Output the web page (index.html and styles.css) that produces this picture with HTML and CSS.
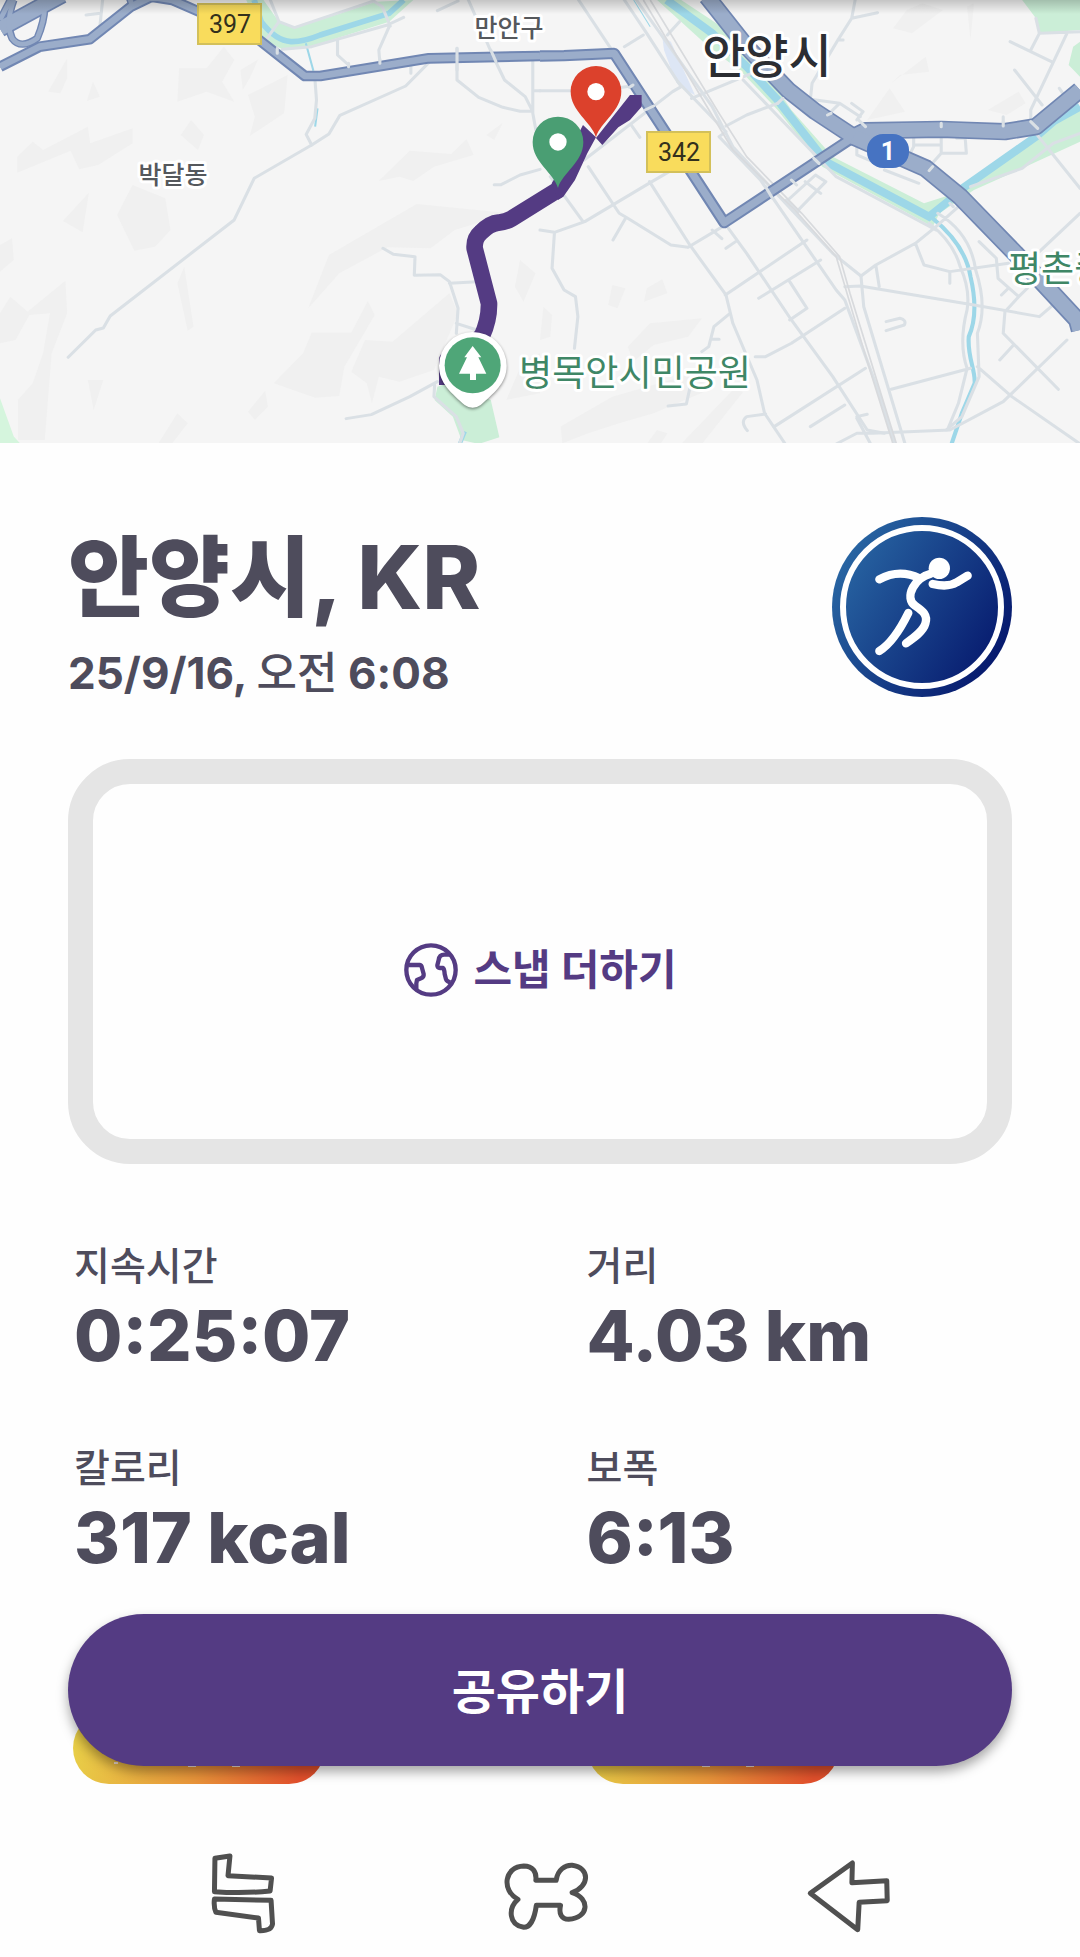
FILE: index.html
```html
<!DOCTYPE html>
<html lang="ko">
<head>
<meta charset="utf-8">
<meta name="viewport" content="width=device-width, initial-scale=1">
<title>안양시, KR</title>
<link rel="stylesheet" href="styles.css">
</head>
<body>
<main class="page">
  <svg class="map" viewBox="0 0 1080 443" role="img" aria-label="지도">
    <defs>
      <linearGradient id="topShade" x1="0" y1="0" x2="0" y2="1">
        <stop offset="0" stop-color="#000" stop-opacity=".2"/>
        <stop offset="1" stop-color="#000" stop-opacity="0"/>
      </linearGradient>
    </defs>
    <rect width="1080" height="443" fill="#f5f5f5"/>

    <!-- west half -->
    <g transform="scale(.3444 .3333)">
      <g class="relief">
        <path d="M50 470L95 425 125 450 255 380 262 430 385 385V430L285 495 230 508 205 452 50 518Z"/>
        <path d="M520 205H600L650 140 680 180 645 245 680 305 600 275 515 305Z"/>
        <path d="M698 210L750 178 725 235 705 270ZM720 285L835 225 825 340 725 408 740 350Z"/>
        <path d="M195 175V235L175 280 140 275ZM270 245L290 290 252 303ZM555 360L592 405 575 450 525 405Z"/>
        <path d="M385 555L480 595 495 690 450 740 390 752 340 645ZM258 578L240 697 183 663Z"/>
        <path d="M895 925L955 765 1210 612 1480 640 1320 690 1250 745 1125 742 985 820Z"/>
        <path d="M1100 543L1190 452 1310 462 1355 418 1375 465 1260 500 1200 543 1160 530Z"/>
        <path d="M1460 368L1435 420 1412 405ZM535 800L562 980 545 992 515 850Z"/>
        <path d="M905 998H1020L1068 903 1088 945 1000 1100 985 1188 915 1193 795 1150 880 1060Z"/>
        <path d="M1060 1020L1140 1025 1305 880 1330 940 1260 1110 1160 1145 1100 1130 1080 1210 1065 1150 1020 1115Z"/>
        <path d="M190 842L195 940 150 1060 130 1320H52V1200L95 1150 125 1060 145 940 85 945 45 1020 0 1030V940L30 890 80 935Z"/>
        <path d="M255 1140H300L272 1230ZM770 1172L778 1220 740 1260 720 1235ZM515 1240L545 1270 500 1330H460ZM35 715L40 780 0 815V735ZM1510 780L1555 820 1520 905 1495 860Z"/>
        <path d="M1520 1080L1568 1060V1180L1470 1200Z"/>
      </g>
      <path d="M0 1195L40 1310 60 1332H0Z" fill="#d5f5dd"/>
      <path d="M715 0H765L810 65 855 85 1090 5 1200 0 1130 65 900 140 820 148 765 120Z" fill="#cbeed7"/>
      <path d="M738 0L758 65Q800 122 845 125Q880 126 930 105L1130 40 1172 0" class="river" stroke-width="17"/>
      <path d="M888 130L910 212M922 325L915 380" class="river" stroke-width="6"/>
      <path d="M1270 1160L1300 1150 1425 1200 1450 1312 1390 1332 1340 1320 1315 1250 1262 1200Z" fill="#cbeed7"/>
      <path d="M1335 1332L1350 1295" class="river" stroke-width="12"/>
      <g class="street">
        <path d="M198 1072L278 990 300 984 320 948 680 660 738 535 905 435 955 402 987 346 1178 258 1245 188"/>
        <path d="M905 435L889 403 914 355 919 300 914 232"/>
        <path d="M1005 1256L1078 1244 1190 1190 1270 1145M1112 745L1142 763 1205 770 1203 826 1278 824 1305 845 1330 925 1325 1000M1305 850L1385 845M1325 970L1385 990"/>
        <path d="M250 45L292 40M298 0L290 80M785 0L810 65 855 83 1085 3 1110 20 1133 78M765 130L810 65M820 148L905 140 1125 75 1172 52M980 120V165L1012 195M1130 80L1100 150 1103 188M1193 198V220M1270 32L1330 3M1360 0L1430 165 1465 240 1525 290 1547 335M1327 145V240L1390 292 1460 322 1510 334H1547M1547 182V340L1556 390M1547 272H1568M1435 554H1455L1510 525 1568 508M1262 1155L1260 1190 1325 1250 1345 1300 1335 1330"/>
      </g>
      <g fill="none" stroke="#7187b3" stroke-linejoin="round">
        <path d="M0 86L180 -15" stroke-width="52"/>
        <path d="M0 200L115 140 260 118 380 20 440 -10 500 0 600 45 740 110 885 228H930L1245 175 1568 168" stroke-width="32"/>
        <path d="M40 0Q15 70 35 115Q60 150 108 115Q135 50 128 0M0 60L30 0M375 -10L385 20" stroke-width="22"/>
      </g>
      <g fill="none" stroke="#9badca" stroke-linejoin="round">
        <path d="M0 86L180 -15" stroke-width="42"/>
        <path d="M0 200L115 140 260 118 380 20 440 -10 500 0 600 45 740 110 885 228H930L1245 175 1568 168" stroke-width="20"/>
        <path d="M40 0Q15 70 35 115Q60 150 108 115Q135 50 128 0M0 60L30 0M375 -10L385 20" stroke-width="14"/>
      </g>
      <path class="street" d="M1327 145V210M1425 150L1440 185M1103 178V190M805 145V160M1012 190V200"/>
    </g>

    <!-- east half -->
    <g transform="translate(540 0) scale(.3444 .3333)">
      <g class="relief">
        <path d="M1065 30L1110 10 1170 30 1080 100 1025 85ZM1120 170L1130 215 1045 225 1020 250ZM1015 265L1060 335 950 360ZM1390 275L1410 310 1355 345 1300 330ZM1240 20L1260 10 1250 120Z"/>
        <path d="M470 955L430 1010 330 1035 270 1085 255 1040 320 970ZM210 855L248 865 225 925 198 915ZM355 838L370 880 302 905 310 865ZM10 920L35 945 30 1010 0 1020Z"/>
        <path d="M60 1280L210 1190 480 1110 490 1170 330 1240 230 1270 140 1300 65 1330ZM560 1170L590 1175 470 1332H410ZM340 1290L370 1300 350 1332H310Z"/>
      </g>
      <path d="M355 110L380 125 450 285 420 270 385 220 360 150Z" fill="#dde6f5"/>
      <path d="M1400 0H1568V90L1450 100 1440 55ZM1548 140L1568 125V230L1535 195Z" fill="#cbeed7"/>
      <path d="M340 0H410L600 130 730 330 850 470 1115 610 1190 585 1440 400 1568 325V425L1400 505 1260 570 1160 640 1140 680 820 500 690 330 580 210 500 150Z" fill="#cbeed7"/>
      <path d="M860 420L730 280 820 330 1050 410 1200 560 1110 605 850 465Z" fill="#f5f5f5"/>
      <g class="river">
        <path d="M368 0L500 100 600 200 690 300 830 485 1130 650 1190 600M1220 570L1440 410 1490 365 1568 320" stroke-width="24"/>
        <path d="M1140 655Q1235 735 1250 830Q1275 940 1245 1010C1240 1070 1265 1110 1262 1150L1225 1240 1195 1332" stroke-width="12"/>
        <path d="M272 0L320 80" stroke-width="3"/>
      </g>
      <g class="street">
        <path d="M112 0L215 160M245 0L310 100 400 245 540 395 520 410 640 540 860 870 885 900 985 1180 1030 1332M280 0L500 320 560 440 740 640 850 760 932 828 940 920 1060 1332"/>
        <path d="M0 272H90M180 270L265 258M128 480L385 275 410 260 400 245M265 375L290 412M140 500L230 640 250 652 380 735 430 742 530 680M30 530L125 665M0 690L42 697 130 665 320 548 400 500M42 697L35 805 70 870 103 890 110 950 100 1045M250 652L212 720M318 545L435 735 540 885 560 970 630 1140 652 1240 712 1332M535 668L600 760 730 960 850 1130 950 1290 1000 1300M500 690L528 716M540 745L568 725M430 742L440 735"/>
        <path d="M538 885L775 720M635 895L815 780M725 845L775 925 725 960M550 942L505 980 490 1040 470 1055M500 1018H520M625 1070H655L730 1030 885 925M680 1280L945 1105M785 1280L885 1215M372 1218L425 1212 435 1165M655 1242L600 1250Q580 1265 602 1292M860 1332L920 1300 965 1300 1190 1290 1345 1205 1530 1020M920 1255L960 1332M920 1250L950 1243"/>
        <path d="M540 378L600 345 690 310M440 295L620 218M370 105L405 65M245 140L300 105M915 0L905 55 865 120 790 250 785 298 870 310 930 350M905 55L980 38M835 345L870 310M905 310L938 335 920 360M865 120H880M590 240L860 530 1150 690M720 600L800 525 830 545 750 630M770 545L815 580M715 600L750 635"/>
        <path d="M1000 510L1100 550M920 440V465L1000 500M1085 410V440L1070 470M1165 370V435H1090M1165 435V460L1130 500M1165 460H1238L1235 420M1235 415H1210M1365 125L1485 185M1450 100L1425 150M1530 100L1425 330V370M1440 55L1450 100 1568 95M1378 210L1458 315M1508 265L1525 290M1345 350V375M1440 400L1568 565M1568 640L1450 755M1490 430L1568 400M1250 560L1400 505 1490 430"/>
        <path d="M932 828L975 795 1090 730 1150 680 1215 620M1090 730L1115 795 1190 815 1360 790M1190 815V850M975 795L985 860M885 860L930 858 1260 915 1450 950 1490 915M1155 640Q1250 700 1265 810Q1300 920 1270 1000L1275 1130 1225 1250M1130 670Q1200 725 1220 800Q1250 870 1240 930Q1215 1030 1240 1105L1215 1210 1185 1285M1275 725L1325 775 1330 835 1390 890 1350 935 1345 1000 1505 1168M1390 890L1415 865M1340 885L1360 865M1335 1080L1375 1035M1005 965L1045 955Q1065 960 1058 975L1005 992M1020 1168L1250 1105M1270 1100L1370 1190 1568 1332M1225 1250L1180 1290"/>
      </g>
      <g class="rail">
        <path d="M300 0L560 450 740 630 860 770 940 1050 1025 1332M320 0L520 340 600 470 760 640 870 770 900 880 1035 1332"/>
      </g>
      <g class="road-edge">
        <path d="M0 168L70 167 215 160 535 668 905 415" stroke-width="34"/>
        <path d="M485 -10L600 140 720 270 800 335 910 410 945 392 1165 388 1350 395 1440 380 1568 270" stroke-width="52"/>
        <path d="M910 410L1120 505 1220 590 1380 760 1560 960 1568 990" stroke-width="54"/>
      </g>
      <g class="road-fill">
        <path d="M0 168L70 167 215 160 535 668 905 415" stroke-width="22"/>
        <path d="M485 -10L600 140 720 270 800 335 910 410 945 392 1165 388 1350 395 1440 380 1568 270" stroke-width="42"/>
        <path d="M910 410L1120 505 1220 590 1380 760 1560 960 1568 990" stroke-width="44"/>
      </g>
      <path class="street" d="M690 310L705 295M260 262L270 255M305 330L330 318M795 475L810 490M655 560L675 595M730 540L745 555M835 345L845 340M925 360L945 380M1165 370V380M1425 365L1445 385M1190 610L1200 620M1345 365V378M1140 500L1130 512"/>
    </g>

    <!-- walked route -->
    <g transform="translate(400 40) scale(.3333)" fill="none" stroke="#543b83" stroke-width="50" stroke-linejoin="round">
      <path d="M142 1035V960L245 890Q268 840 267 790L224 625Q222 595 242 578Q270 550 295 548Q320 545 335 536L473 450"/>
      <path fill="#543b83" stroke="none" d="M455 430L474 400 549 255 588 292 562 340 525 420 490 470 474 480Z"/>
      <path fill="#543b83" stroke="none" d="M588 294L690 165H725V200L690 240 655 262 607 315Z"/>
    </g>

    <!-- pins -->
    <g transform="translate(400 40) scale(.3333)">
      <path fill="#dc412c" d="M588 292C574 245 512 215 512 154A76 76 0 0 1 664 154C664 215 602 245 588 292Z"/>
      <circle cx="588" cy="155" r="26" fill="#fff"/>
      <path fill="#4a9e73" d="M474 444C460 397 398 367 398 306A76 76 0 0 1 550 306C550 367 488 397 474 444Z"/>
      <circle cx="474" cy="306" r="26" fill="#fff"/>
      <path class="park-pin" d="M218 876A102 102 0 0 1 320 977C320 1030 280 1060 242 1095Q218 1112 194 1095C156 1060 117 1030 117 977A102 102 0 0 1 218 876Z"/>
      <circle cx="218" cy="976" r="84" fill="#4fa678"/>
      <path fill="#fff" d="M218 918L244 952H235L259 1001H228V1020H210V1001H177L201 952H193Z"/>
    </g>

    <!-- shields and place names -->
    <rect x="198" y="4" width="63" height="40" class="shield"/>
    <text x="230" y="33" class="shield-text">397</text>
    <rect x="647" y="132" width="63" height="40" class="shield"/>
    <text x="679" y="161" class="shield-text">342</text>
    <rect x="867" y="134" width="42" height="34" rx="16" fill="#4673c2"/>
    <text x="888" y="160" class="shield-text shield-text--light">1</text>
    <text x="509" y="37" class="place">만안구</text>
    <text x="173" y="184" class="place">박달동</text>
    <text x="767" y="73" class="place place--city">안양시</text>
    <text x="635" y="386" class="place place--park">병목안시민공원</text>
    <text x="1008" y="282" class="place place--park place--start">평촌중앙공원</text>
    <rect width="1080" height="14" fill="url(#topShade)"/>
  </svg>

  <div class="content">
    <header class="summary">
      <div>
        <h1 class="title">안양시, KR</h1>
        <p class="date">25/9/16, <span class="meridiem">오전</span> 6:08</p>
      </div>
      <svg class="badge" viewBox="96 80 540 540" role="img" aria-label="달리기">
        <defs>
          <linearGradient id="blue" x1="0" y1=".2" x2="1" y2=".8">
            <stop offset="0" stop-color="#2a6aa6"/>
            <stop offset="1" stop-color="#04146a"/>
          </linearGradient>
        </defs>
        <circle cx="366" cy="350" r="270" fill="url(#blue)"/>
        <circle cx="366" cy="350" r="237" fill="none" stroke="#fff" stroke-width="18"/>
        <circle cx="418" cy="234" r="32" fill="#fff"/>
        <g fill="none" stroke="#fff" stroke-width="25" stroke-linecap="round" stroke-linejoin="round">
          <path d="M238 267C275 247 315 243 358 264"/>
          <path d="M392 250C365 257 348 275 339 291C326 315 330 335 345 346C365 360 385 372 376 400C370 422 345 440 318 459"/>
          <path d="M398 281Q445 292 470 276L503 256"/>
          <path d="M325 368Q282 455 238 482"/>
        </g>
      </svg>
    </header>

    <button class="snap" type="button">
      <svg class="snap-icon" viewBox="66 66 168 168" aria-hidden="true">
        <g fill="none" stroke="#543b83" stroke-width="13" stroke-linejoin="round">
          <circle cx="150" cy="150" r="74"/>
          <path d="M82 135H116Q122 136 123 144L128 162Q129 171 120 175L108 180 106 190V208"/>
          <path d="M207 104H190Q175 104 173 120L169 136Q169 144 177 144H186Q190 146 191 162L195 178Q198 186 209 187"/>
        </g>
      </svg>
      <span>스냅 더하기</span>
    </button>

    <dl class="stats">
      <div class="stat"><dt>지속시간</dt><dd>0:25:07</dd></div>
      <div class="stat"><dt>거리</dt><dd>4.03 km</dd></div>
      <div class="stat"><dt>칼로리</dt><dd>317 kcal</dd></div>
      <div class="stat"><dt>보폭</dt><dd>6:13</dd></div>
    </dl>

    <div class="actions">
      <div class="chips">
        <span class="chip">
          <svg viewBox="0 0 252 72" aria-hidden="true"><path d="M41 51H45M115 54H123M159 54H167"/></svg>
        </span>
        <span class="chip">
          <svg viewBox="0 0 252 72" aria-hidden="true"><path d="M115 54H123M159 54H167"/></svg>
        </span>
      </div>
      <button class="share" type="button">공유하기</button>
    </div>
  </div>

  <nav class="navbar">
    <button type="button" aria-label="최근 앱">
      <svg viewBox="78 69 186 300" preserveAspectRatio="none"><path d="M113 115L144 108 140 167 230 174 227 213Q170 221 112 215ZM112 237L229 241 232 312Q230 333 205 332L203 294 115 277Q110 260 112 237Z"/></svg>
    </button>
    <button type="button" aria-label="홈">
      <svg viewBox="703 69 186 300" preserveAspectRatio="none"><path d="M775 181H817C820 148 836 135 850 136C888 143 886 200 850 218C888 235 885 294 843 298C828 297 822 282 826 256H776C772 300 762 322 750 322C719 315 717 265 738 238C703 210 710 140 750 138C768 138 777 155 775 181Z"/></svg>
    </button>
    <button type="button" aria-label="뒤로">
      <svg viewBox="1326 69 186 300" preserveAspectRatio="none"><path d="M1426 129L1425 188 1497 182 1498 242 1440 247 1437 329 1339 220Z"/></svg>
    </button>
  </nav>
</main>
</body>
</html>
```

FILE: styles.css
```css
* {
  box-sizing: border-box;
}

body {
  margin: 0;
  background: #fefefe;
  color: #4e4c5c;
  font-family: Inter, "Noto Sans CJK KR", sans-serif;
}

button {
  border: 0;
  padding: 0;
  background: none;
  font: inherit;
  cursor: pointer;
}

.page {
  display: flex;
  flex-direction: column;
  min-height: 100vh;
}

/* Map */
.map {
  display: block;
  width: 100%;
}

.relief {
  fill: #f0f0f0;
}

.river {
  fill: none;
  stroke: #9dd7e8;
}

.street,
.rail,
.road-edge,
.road-fill {
  fill: none;
  stroke-linejoin: round;
}

.street {
  stroke: #dae0e5;
  stroke-width: 9;
  stroke-linecap: round;
}

.rail {
  stroke: #d8dadd;
  stroke-width: 5;
}

.road-edge {
  stroke: #7187b3;
}

.road-fill {
  stroke: #9badca;
}

.park-pin {
  fill: #fff;
  filter: drop-shadow(0 4px 5px rgb(0 0 0 / 45%));
}

.shield {
  fill: #f9dc5c;
  stroke: #d3c05a;
  stroke-width: 2;
}

.shield-text {
  font: 25px Roboto, sans-serif;
  fill: #33301c;
  text-anchor: middle;
}

.shield-text--light {
  font-weight: 700;
  fill: #fff;
}

.place {
  font: 500 25px "Noto Sans CJK KR", sans-serif;
  fill: #55585c;
  stroke: #fff;
  stroke-width: 6px;
  stroke-linejoin: round;
  paint-order: stroke;
  text-anchor: middle;
}

.place--city {
  font-size: 47px;
  fill: #2c2e33;
}

.place--park {
  font-size: 36px;
  font-weight: 400;
  fill: #3f8766;
}

.place--start {
  text-anchor: start;
}

/* Workout */
.content {
  padding: 74px 68px 0;
}

.summary {
  display: flex;
  align-items: flex-start;
  justify-content: space-between;
  height: 242px;
}

.title {
  margin: 10px 0 0;
  font-size: 88px;
  line-height: 100px;
  font-weight: 800;
}

.date {
  margin: 20px 0 0;
  font-size: 44px;
  line-height: 52px;
  font-weight: 700;
}

.meridiem {
  font-weight: 500;
}

.badge {
  flex: none;
  width: 180px;
  height: 180px;
}

.snap {
  display: flex;
  align-items: center;
  justify-content: center;
  gap: 14px;
  width: 100%;
  height: 405px;
  padding-top: 16px;
  border: 25px solid #e5e5e5;
  border-radius: 62px;
  color: #543b83;
  font-size: 42px;
  line-height: 60px;
  font-weight: 700;
}

.snap-icon {
  width: 56px;
  height: 56px;
}

.stats {
  display: grid;
  grid-template-columns: 11fr 9fr;
  row-gap: 62px;
  margin: 76px 0 0;
  padding: 0 6px;
}

.stat dt {
  font-size: 39px;
  line-height: 52px;
  font-weight: 500;
}

.stat dd {
  margin: 0;
  font-size: 70px;
  line-height: 88px;
  font-weight: 800;
}

.actions {
  position: relative;
  margin-top: 32px;
  padding: 98px 5px 0;
}

.chips {
  display: grid;
  grid-template-columns: 11fr 9fr;
}

.chip {
  width: 252px;
  height: 72px;
  border-radius: 36px;
  background: linear-gradient(100deg, #e8d148 0%, #e9953a 50%, #e2502c 90%);
}

.chip svg {
  display: block;
}

.chip path {
  fill: none;
  stroke: #f3dfd0;
  stroke-width: 2;
}

.share {
  position: absolute;
  top: 0;
  left: 0;
  width: 100%;
  height: 152px;
  padding-bottom: 4px;
  border-radius: 76px;
  background: #543b83;
  box-shadow: 0 6px 12px rgb(0 0 0 / 35%);
  color: #fff;
  font-size: 48px;
  font-weight: 700;
}

.navbar {
  display: grid;
  grid-template-columns: repeat(3, 1fr);
  justify-items: center;
  margin-top: auto;
  padding: 0 80px 14px 92px;
}

.navbar svg {
  display: block;
  width: 90px;
  height: 100px;
}

.navbar path {
  fill: none;
  stroke: #505050;
  stroke-width: 5px;
  stroke-linejoin: round;
  vector-effect: non-scaling-stroke;
}
```
